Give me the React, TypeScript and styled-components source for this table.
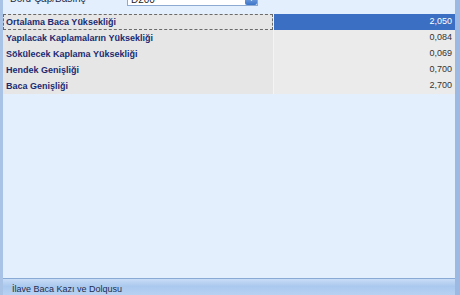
import styled, { createGlobalStyle } from "styled-components";

const GlobalStyle = createGlobalStyle`
  html, body {
    margin: 0;
    padding: 0;
    width: 460px;
    height: 295px;
    overflow: hidden;
    background: #e3effc;
  }
  body {
    font-family: "Liberation Sans", Arial, sans-serif;
  }
`;

const Frame = styled.div`
  width: 460px;
  height: 295px;
  box-sizing: border-box;
  display: flex;
  flex-direction: column;
  border-left: 3px solid #a9c3e6;
  border-right: 5px solid #9bb9e2;
  background: #e3effc;
  overflow: hidden;
`;

const TopBar = styled.div`
  height: 22px;
  margin-top: -8px;
  flex-shrink: 0;
  display: flex;
  align-items: flex-start;
  padding-left: 7px;
  gap: 14px;
`;

const FieldLabel = styled.span`
  font-size: 10px;
  color: #1d2a44;
  line-height: 13px;
  width: 103px;
`;

const Combo = styled.div`
  width: 131px;
  height: 14px;
  box-sizing: border-box;
  background: #ffffff;
  border: 1px solid #8daad2;
  display: flex;
  align-items: center;
  justify-content: space-between;
  padding-left: 3px;
  font-size: 10px;
  color: #222;
`;

const ComboButton = styled.div`
  width: 12px;
  height: 12px;
  border-radius: 2px;
  background: linear-gradient(#9cc0f0, #3c75c8);
  display: flex;
  align-items: center;
  justify-content: center;
`;

const Grid = styled.div`
  display: flex;
  flex-direction: column;
`;

const Row = styled.div`
  display: grid;
  grid-template-columns: 270px 1fr;
  height: 16px;
  background: #e9e9e9;
  border-bottom: 1px solid #f3f3f3;
  box-sizing: border-box;
`;

const LabelCell = styled.div<{ $focus?: boolean }>`
  font-size: 9px;
  font-weight: bold;
  color: #1c2a72;
  line-height: 14px;
  padding-left: 2px;
  box-sizing: border-box;
  background: #e6e6e6;
  border: 1px ${(p) => (p.$focus ? "dashed #6a6a6a" : "solid transparent")};
  white-space: nowrap;
`;

const ValueCell = styled.div<{ $selected?: boolean }>`
  font-size: 9px;
  line-height: 15px;
  text-align: right;
  padding-right: 3px;
  color: ${(p) => (p.$selected ? "#ffffff" : "#333333")};
  background: ${(p) => (p.$selected ? "#3a6fc4" : "#ebebeb")};
  border-left: 1px solid #f4f4f4;
`;

const Filler = styled.div`
  flex: 1;
`;

const StatusBar = styled.div`
  height: 16px;
  flex-shrink: 0;
  border-top: 1px solid #8aaad6;
  background: linear-gradient(#c9ddf6 0%, #aac8ee 45%, #b7d1f2 100%);
  font-size: 9px;
  color: #1b2d4f;
  padding-left: 9px;
  line-height: 21px;
`;

const rows = [
  { label: "Ortalama Baca Yüksekliği", value: "2,050" },
  { label: "Yapılacak Kaplamaların Yüksekliği", value: "0,084" },
  { label: "Sökülecek Kaplama Yüksekliği", value: "0,069" },
  { label: "Hendek Genişliği", value: "0,700" },
  { label: "Baca Genişliği", value: "2,700" },
];

export default function App() {
  return (
    <>
      <GlobalStyle />
      <Frame>
        <TopBar>
          <FieldLabel>Boru Çap/Basınç</FieldLabel>
          <Combo>
            D200
            <ComboButton>
              <svg width="7" height="4" viewBox="0 0 7 4">
                <path d="M0 0 L7 0 L3.5 4 Z" fill="#fff" />
              </svg>
            </ComboButton>
          </Combo>
        </TopBar>
        <Grid>
          {rows.map((r, i) => (
            <Row key={r.label}>
              <LabelCell $focus={i === 0}>{r.label}</LabelCell>
              <ValueCell $selected={i === 0}>{r.value}</ValueCell>
            </Row>
          ))}
        </Grid>
        <Filler />
        <StatusBar>İlave Baca Kazı ve Dolqusu</StatusBar>
      </Frame>
    </>
  );
}
